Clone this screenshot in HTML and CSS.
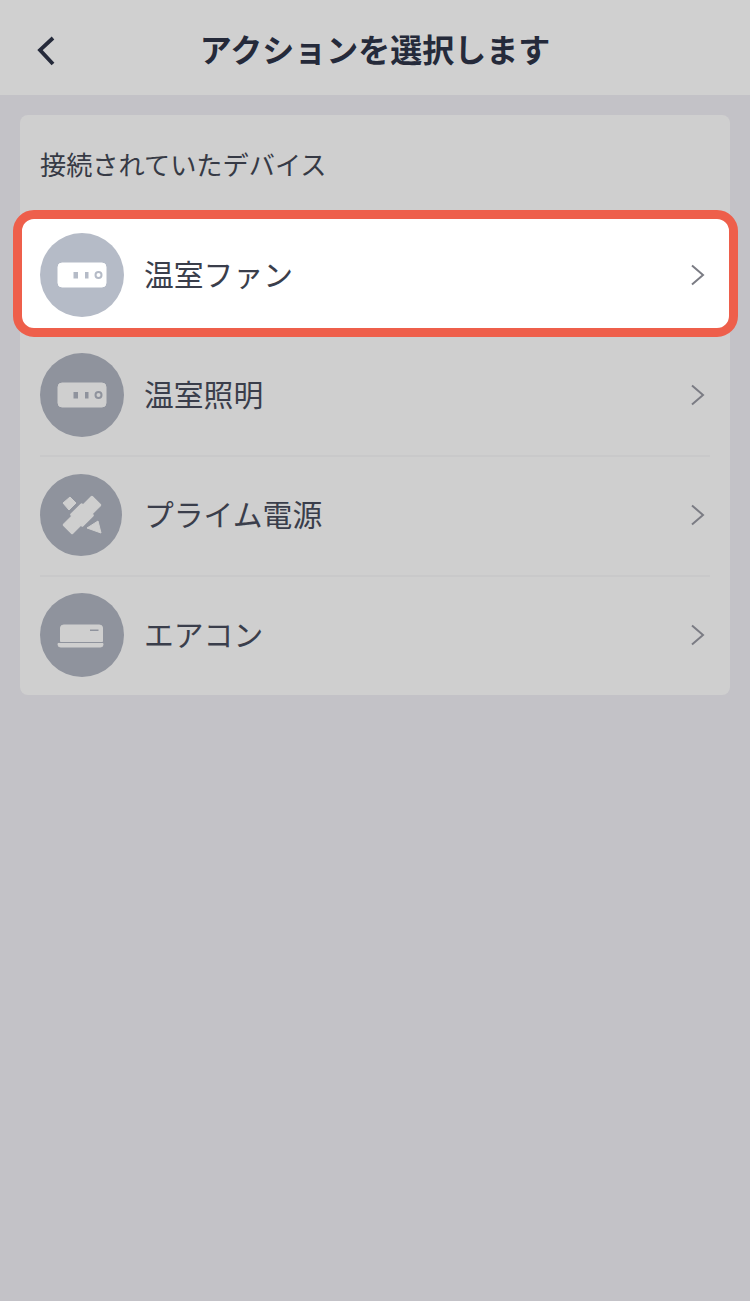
FILE: index.html
```html
<!DOCTYPE html>
<html lang="ja">
<head>
    <meta charset="UTF-8">
    <meta name="viewport" content="width=device-width, initial-scale=1.0">
    <title>アクションを選択します</title>
    <link rel="stylesheet" href="styles.css">
</head>
<body>
    <header class="topbar">
        <svg class="back" width="24" height="32" viewBox="0 0 24 32">
            <path d="M19 4 L6 16 L19 30" />
        </svg>
        <h1>アクションを選択します</h1>
    </header>

    <main class="card">
        <h2>接続されていたデバイス</h2>

        <div class="row row-active">
            <svg class="icon" width="84" height="84" viewBox="0 0 84 84">
                <circle class="disc" cx="42" cy="42" r="42" />
                <rect class="shape" x="18" y="30" width="48" height="24" rx="4" />
                <rect class="hole" x="33.5" y="39" width="4.5" height="6.5" />
                <rect class="hole" x="45" y="39" width="3.5" height="6.5" />
                <circle class="ring" cx="58.5" cy="42" r="3" />
            </svg>
            <span class="name">温室ファン</span>
            <svg class="chevron" width="16" height="24" viewBox="0 0 16 24">
                <path d="M2 2.5 L13 12 L2 21.5" />
            </svg>
        </div>

        <div class="row">
            <svg class="icon" width="84" height="84" viewBox="0 0 84 84">
                <circle class="disc" cx="42" cy="42" r="42" />
                <rect class="shape" x="18" y="30" width="48" height="24" rx="4" />
                <rect class="hole" x="33.5" y="39" width="4.5" height="6.5" />
                <rect class="hole" x="45" y="39" width="3.5" height="6.5" />
                <circle class="ring" cx="58.5" cy="42" r="3" />
            </svg>
            <span class="name">温室照明</span>
            <svg class="chevron" width="16" height="24" viewBox="0 0 16 24">
                <path d="M2 2.5 L13 12 L2 21.5" />
            </svg>
        </div>

        <div class="row">
            <svg class="icon" width="84" height="84" viewBox="0 0 84 84">
                <circle class="disc" cx="41" cy="42" r="41" />
                <g transform="rotate(-45 42 42)">
                    <rect class="shape" x="21.5" y="35.5" width="41" height="13" rx="1" />
                    <rect class="shape" x="34" y="33.5" width="16" height="17" rx="1" />
                </g>
                <path class="shape" d="M23 30 L30 24 L36 30 L29 37 Z" />
                <path class="shape" d="M47 55 L58 48 L61 60 Z" />
            </svg>
            <span class="name">プライム電源</span>
            <svg class="chevron" width="16" height="24" viewBox="0 0 16 24">
                <path d="M2 2.5 L13 12 L2 21.5" />
            </svg>
        </div>

        <div class="row">
            <svg class="icon" width="84" height="84" viewBox="0 0 84 84">
                <circle class="disc" cx="42" cy="42" r="42" />
                <path class="shape" d="M20.5 35 a3 3 0 0 1 3 -3 h36 a3 3 0 0 1 3 3 v13.5 h-42 Z" />
                <path class="shape" d="M18 50.5 h45 v1 a2.5 2.5 0 0 1 -2.5 2.5 h-40 a2.5 2.5 0 0 1 -2.5 -2.5 Z" />
                <rect class="hole" x="50" y="36.5" width="8.5" height="1.5" />
            </svg>
            <span class="name">エアコン</span>
            <svg class="chevron" width="16" height="24" viewBox="0 0 16 24">
                <path d="M2 2.5 L13 12 L2 21.5" />
            </svg>
        </div>
    </main>
</body>
</html>
```

FILE: styles.css
```css
html, body {
    margin: 0;
    padding: 0;
}

body {
    height: 1301px;
    overflow: hidden;
    background-color: #c3c2c7;
    color: #2e3240;
    font-family: "Noto Sans CJK JP", "Noto Sans", sans-serif;
}

.topbar {
    position: relative;
    height: 95px;
    display: flex;
    align-items: center;
    justify-content: center;
    background-color: #d0d0d0;
}

.topbar h1 {
    margin: 0;
    font-size: 32px;
    font-weight: 700;
    line-height: 1;
    color: #252a3a;
}

.back {
    position: absolute;
    left: 34px;
    top: 34px;
}

.back path {
    fill: none;
    stroke: #252a3a;
    stroke-width: 3.8;
}

.card {
    margin: 20px 20px 0;
    background-color: #cfcfcf;
    border-radius: 8px;
}

.card h2 {
    margin: 0;
    height: 98px;
    padding: 0 0 2px 20px;
    display: flex;
    align-items: center;
    font-size: 26.2px;
    font-weight: 400;
    color: #363a45;
}

.row {
    position: relative;
    height: 120px;
    margin: 0 20px;
    display: flex;
    align-items: center;
}

.row + .row + .row {
    box-shadow: inset 0 2px 0 #c9c9ca;
}

.row-active::before {
    content: "";
    position: absolute;
    top: -5px;
    bottom: -2px;
    left: -27px;
    right: -28px;
    box-sizing: border-box;
    background-color: #fff;
    border: 9px solid #ee5f4b;
    border-radius: 21px;
}

.row-active > * {
    position: relative;
}

.icon {
    flex-shrink: 0;
}

.disc {
    fill: #8f939d;
}

.shape {
    fill: #cfcfcf;
    stroke: #cfcfcf;
    stroke-width: 1;
    stroke-linejoin: round;
}

.hole {
    fill: #8f939d;
}

.ring {
    fill: none;
    stroke: #8f939d;
    stroke-width: 2;
}

.row-active .disc {
    fill: #b5bbc7;
}

.row-active .shape {
    fill: #fff;
    stroke: #fff;
}

.row-active .hole {
    fill: #b5bbc7;
}

.row-active .ring {
    stroke: #b5bbc7;
}

.name {
    margin: 0 0 2px 20px;
    font-size: 29.8px;
    line-height: 1;
    color: #3a3e4b;
    flex: 1;
}

.chevron path {
    fill: none;
    stroke: #7b7c84;
    stroke-width: 2;
}

.chevron {
    margin-right: 4px;
}
```
